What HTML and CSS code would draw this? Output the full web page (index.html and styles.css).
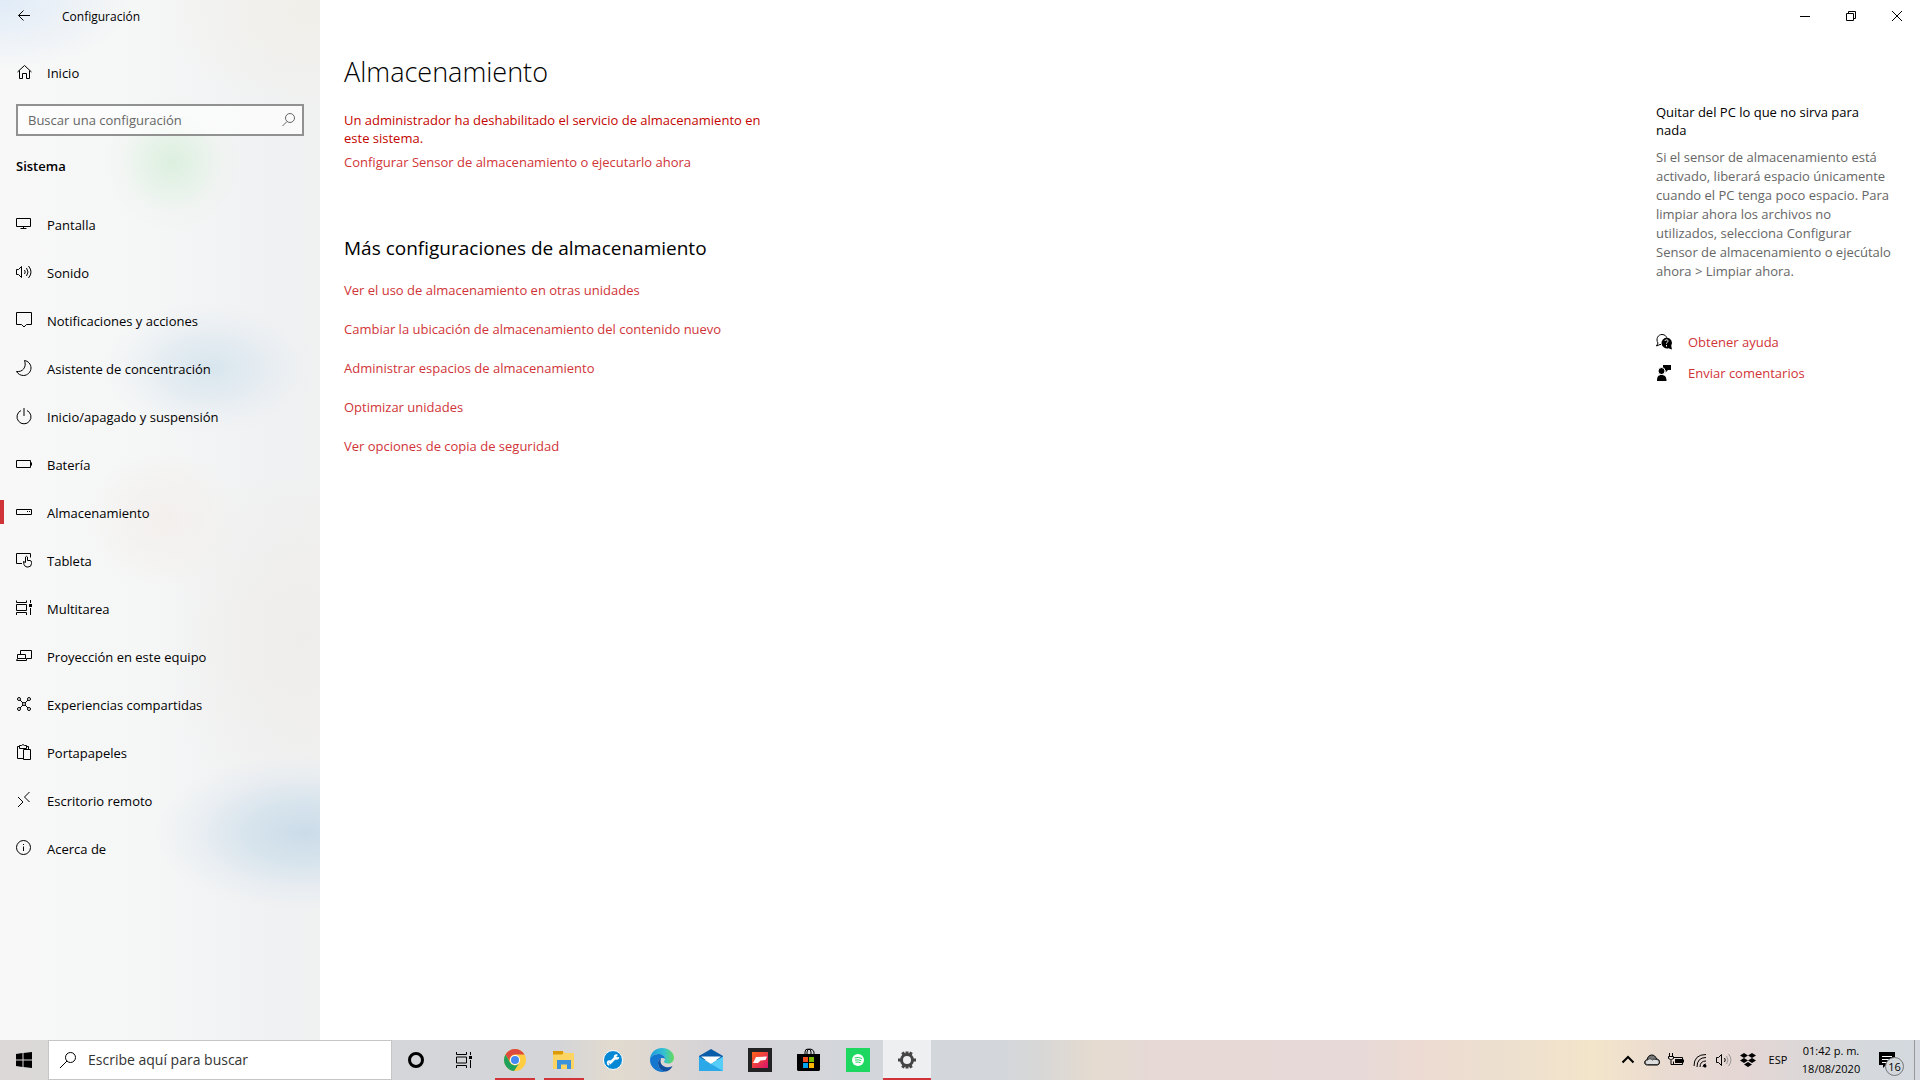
FILE: index.html
```html
<!DOCTYPE html>
<html lang="es">
<head>
<meta charset="utf-8">
<meta name="viewport" content="width=device-width, initial-scale=1">
<title>Configuración</title>
<link rel="stylesheet" href="styles.css">
</head>
<body>
<div class="window">
  <aside class="sidebar">
    <header class="titlebar">
      <button class="back" type="button" aria-label="Atrás"><svg class="icon" viewBox="0 0 16 16"><path d="M14 7.500H2.500M7.500 2.500l-5 5 5 5"/></svg></button>
      <span class="app-name">Configuración</span>
    </header>
    <a class="nav-link home" href="#"><svg class="icon" viewBox="0 0 16 16"><path d="M1.500 8 8.500 1.500 15.500 8M3.500 6.500v8h3v-5h4v5h3v-8"/></svg>Inicio</a>
    <form class="search" role="search">
      <input type="text" aria-label="Buscar una configuración" placeholder="Buscar una configuración">
      <button type="button" aria-label="Buscar"><svg class="icon icon-grey" viewBox="0 0 16 16"><circle cx="10" cy="6" r="4.500"/><path d="M7 9.500 2.500 14"/></svg></button>
    </form>
    <h2 class="section">Sistema</h2>
    <nav class="nav" aria-label="Sistema">
      <a class="nav-link" href="#"><svg class="icon" viewBox="0 0 16 16"><path d="M.5 2.500h14v8H.5zM7.500 10.500v2M4.500 12.500h6"/></svg>Pantalla</a>
      <a class="nav-link" href="#"><svg class="icon" viewBox="0 0 16 16"><path d="M.5 5.500h2l3-3v11l-3-3h-2zM8.500 6q1.500 2 0 4M10.500 4q3 4 0 8M12.500 2q5 6 0 12"/></svg>Sonido</a>
      <a class="nav-link" href="#"><svg class="icon" viewBox="0 0 16 16"><path d="M.5.500h15v12h-5l-2.500 2.500-2.500-2.500h-5z"/></svg>Notificaciones y acciones</a>
      <a class="nav-link" href="#"><svg class="icon" viewBox="0 0 16 16"><path d="M8.500.5c3.500.5 6.500 3.500 6.500 7.500 0 4-3.500 7.500-7.500 7.500-3 0-5.500-1.500-7-4C6.500 12.500 11 7 8.500.5z"/></svg>Asistente de concentración</a>
      <a class="nav-link" href="#"><svg class="icon" viewBox="0 0 16 16"><path d="M8 0v8M5 2.500a7 7 0 1 0 6 0"/></svg>Inicio/apagado y suspensión</a>
      <a class="nav-link" href="#"><svg class="icon" viewBox="0 0 16 16"><path d="M.5 4.500h14v7H.5zM15.500 6.500v3"/></svg>Batería</a>
      <a class="nav-link active" aria-current="page" href="#"><svg class="icon" viewBox="0 0 16 16"><path d="M.5 5.500h15v5H.5zM11 7.500h1M13 7.500h1"/></svg>Almacenamiento</a>
      <a class="nav-link" href="#"><svg class="icon" viewBox="0 0 16 16"><path d="M6 11.500H.5v-10h14v4M9.500 10.500V5q1-1.500 2 0v3.500h2.500q1.500 0 1.500 2v1q0 3.500-3.500 3.500h-1q-2 0-3-2.500l-.5-3z"/></svg>Tableta</a>
      <a class="nav-link" href="#"><svg class="icon" viewBox="0 0 16 16"><path d="M.5.500v2h10v-2M.5 4.500h10v6H.5zM.5 15v-2.500h10V15M14.500 0v3M14.500 8v7"/><path d="M13 4h3v3h-3z" class="solid"/></svg>Multitarea</a>
      <a class="nav-link" href="#"><svg class="icon" viewBox="0 0 16 16"><path d="M4.500 6V2.500h11v8H11M1.500 10.500v-4h8v4M.5 12.500h10v-2H1.500z"/></svg>Proyección en este equipo</a>
      <a class="nav-link" href="#"><svg class="icon" viewBox="0 0 16 16"><circle cx="3" cy="3" r="1.500"/><circle cx="13" cy="3" r="1.500"/><circle cx="3" cy="13" r="1.500"/><circle cx="13" cy="13" r="1.500"/><circle cx="8" cy="8" r="1.500"/><path d="m4 4 3 3M12 4 9 7M4 12l3-3M12 12 9 9"/></svg>Experiencias compartidas</a>
      <a class="nav-link" href="#"><svg class="icon" viewBox="0 0 16 16"><path d="M7 14.500H1.500v-12h2M10 2.500h2.500V5M3.500 4.500v-3h2q1.500-2 3 0h2v3zM7.500 5.500h7v10h-7z"/></svg>Portapapeles</a>
      <a class="nav-link" href="#"><svg class="icon" viewBox="0 0 16 16"><path d="m2 5 5 5-5 5M13.500 0 8.500 5l5 5"/></svg>Escritorio remoto</a>
      <a class="nav-link" href="#"><svg class="icon" viewBox="0 0 16 16"><circle cx="7.500" cy="7.500" r="7"/><path d="M7.500 6.500V11M7.500 4v1"/></svg>Acerca de</a>
    </nav>
  </aside>
  <div class="pane">
    <div class="caption">
      <button type="button" aria-label="Minimizar"><svg viewBox="0 0 10 10"><path d="M0 5.500h10"/></svg></button>
      <button type="button" aria-label="Restaurar"><svg viewBox="0 0 10 10"><path d="M.5 2.500h7v7h-7zM2.500 2V.5h7v7H8"/></svg></button>
      <button type="button" aria-label="Cerrar"><svg viewBox="0 0 10 10"><path d="m0 0 10 10M10 0 0 10"/></svg></button>
    </div>
    <div class="columns">
      <main class="content">
        <h1>Almacenamiento</h1>
        <p class="warning">Un administrador ha deshabilitado el servicio de almacenamiento en este sistema.</p>
        <a class="link" href="#">Configurar Sensor de almacenamiento o ejecutarlo ahora</a>
        <h2>Más configuraciones de almacenamiento</h2>
        <ul class="links">
          <li><a class="link" href="#">Ver el uso de almacenamiento en otras unidades</a></li>
          <li><a class="link" href="#">Cambiar la ubicación de almacenamiento del contenido nuevo</a></li>
          <li><a class="link" href="#">Administrar espacios de almacenamiento</a></li>
          <li><a class="link" href="#">Optimizar unidades</a></li>
          <li><a class="link" href="#">Ver opciones de copia de seguridad</a></li>
        </ul>
      </main>
      <aside class="help">
        <h3>Quitar del PC lo que no sirva para nada</h3>
        <p>Si el sensor de almacenamiento está activado, liberará espacio únicamente cuando el PC tenga poco espacio. Para limpiar ahora los archivos no utilizados, selecciona Configurar Sensor de almacenamiento o ejecútalo ahora &gt; Limpiar ahora.</p>
        <div class="support">
          <a class="link" href="#"><svg class="icon" viewBox="0 0 16 16"><path d="M5 10.500H4L.5 12 2 9C-.5 5 2 .5 6 .5c3 0 4.500 2 4.500 3"/><path class="solid" d="M10.500 3.500a5.500 5.500 0 0 1 4.700 8.300l.8 3.700-3.600-1.200a5.500 5.500 0 1 1-1.900-10.800z"/><path class="light" d="M8.800 7c.5-1.800 3.700-1.500 3.200.3-.3 1-1.500 1-1.500 2.400M10.500 11v1.500"/></svg>Obtener ayuda</a>
          <a class="link" href="#"><svg class="icon" viewBox="0 0 16 16"><path class="solid" d="M7 0h8v5h-3l-2.500 2.500V5H7z"/><circle class="rim" cx="5.500" cy="6" r="3.500"/><path class="solid" d="M1 16c0-4 1-6 4.500-6s5 2 5 6z"/></svg>Enviar comentarios</a>
        </div>
      </aside>
    </div>
  </div>
</div>
<footer class="taskbar">
  <button class="start" type="button" aria-label="Inicio"><svg class="icon" viewBox="0 0 16 16"><path class="solid" d="M0 2l6.500-1v6.500H0zM7.500.9 16 0v7.500H7.500zM0 8.500h6.500V15L0 14zM7.500 8.500H16V16l-8.500-1z"/></svg></button>
  <label class="task-search"><svg class="icon" viewBox="0 0 16 16"><circle cx="10.500" cy="5.500" r="5"/><path d="M7 9 0 16"/></svg><input type="text" aria-label="Buscar" placeholder="Escribe aquí para buscar"></label>
  <div class="tools">
    <button class="task" type="button" aria-label="Cortana"><svg class="icon" viewBox="0 0 16 16"><circle class="ring" cx="8" cy="8" r="6.500"/></svg></button>
    <button class="task" type="button" aria-label="Vista de tareas"><svg class="icon" viewBox="0 0 16 16"><path d="M.5 0v2.500h10V0M.5 5h10v6H.5zM.5 16v-2.500h10V16M14.500 0v3M14.500 8v8"/><path class="solid" d="M13 4h3v3h-3z"/></svg></button>
  </div>
  <div class="apps">
    <button class="task running" type="button" aria-label="Chrome"><svg class="app" viewBox="0 0 24 24"><circle cx="12" cy="12" r="11" fill="#ffcd41"/><path d="M2.500 6.500A11 11 0 0 1 21.500 6.500H12a5.500 5.500 0 0 0-5.300 7z" fill="#de4b3e"/><path d="M2.500 6.500A11 11 0 0 0 11 23l5-7.500a5.500 5.500 0 0 1-9-1z" fill="#1fa15d"/><circle cx="12" cy="12" r="5" fill="#fff"/><circle cx="12" cy="12" r="4" fill="#4688f1"/></svg></button>
    <button class="task running" type="button" aria-label="Explorador de archivos"><svg class="app" viewBox="0 0 24 24"><path d="M1 3h10l2 2h9v16H1z" fill="#fcd462"/><path d="M1 3h10v2.500l-1 1H1z" fill="#dc9a05"/><path d="M5 12h14v9h-4v-4.500H9V21H5z" fill="#3a91dc"/></svg></button>
    <button class="task" type="button" aria-label="Herramientas"><svg class="app" viewBox="0 0 24 24"><circle cx="12" cy="12" r="9.500" fill="#0788d5" stroke="#fff"/><path d="m8.500 15.500 7-7" stroke="#fff" stroke-width="2.500"/><circle cx="8.500" cy="15" r="1.800" fill="none" stroke="#fff" stroke-width="1.800" stroke-dasharray="8.500 2.800" stroke-dashoffset="-2.800"/><circle cx="15.500" cy="9" r="1.800" fill="none" stroke="#fff" stroke-width="1.800" stroke-dasharray="8.500 2.800"/></svg></button>
    <button class="task" type="button" aria-label="Edge"><svg class="app" viewBox="0 0 24 24"><defs><linearGradient id="edge-top" x2="1"><stop offset="0" stop-color="#1b9de2"/><stop offset=".6" stop-color="#35c1d0"/><stop offset="1" stop-color="#66dc5a"/></linearGradient></defs><path d="M0 12C0 5 5 0 12 0s12 5 12 9.500c0 4-3 6-6 6-2.500 0-4-1-4-2 0-.7 1-1 1-2.500C15 8 12 6 8.500 6 4 6 .5 9 0 12z" fill="url(#edge-top)"/><path d="M0 12c0-3 4-6 8.500-6C12 6 15 8 15 11c-2.500-2.500-7-.500-7 4 0 5 4 8.500 8 8.500C8 25.500 0 20 0 12z" fill="#1377d0"/><path d="M11 10c-2 1-3 3-3 5 0 5 4 8.500 8 8.500 3-.5 5.500-3 6.500-5.500-5 3-12 .500-12-5 0-1 .5-2 .5-3z" fill="#10509f"/></svg></button>
    <button class="task" type="button" aria-label="Correo"><svg class="app" viewBox="0 0 24 24"><path d="m0 8 12-7 12 7v4H0z" fill="#0a5ba8"/><path d="M2 8.500h20L12 16z" fill="#fff"/><path d="M0 8.500 12 16l12-7.500V23H0z" fill="#2ba8e8"/><path d="M12 16 24 8.500V23z" fill="#55cdf8"/></svg></button>
    <button class="task" type="button" aria-label="Juego"><svg class="app" viewBox="0 0 24 24"><defs><linearGradient id="game" x2="1" y2="1"><stop offset="0" stop-color="#ff6419"/><stop offset="1" stop-color="#d9146e"/></linearGradient></defs><path d="M0 0h24v24H0z" fill="#232326"/><path d="M4 4h16v16H4z" fill="url(#game)"/><path d="m8 9 11-.5-1.500 3.500-5 .5-2.500 2.500H5z" fill="#fff"/></svg></button>
    <button class="task" type="button" aria-label="Microsoft Store"><svg class="app" viewBox="0 0 24 24"><path d="M8 6V4q0-3 3-3t3 3v2M10 6V4q0-3 3-3t4 3v2" fill="none" stroke="#000"/><path d="M0 6h23v16l-1 1H1l-1-1z"/><path d="M6 9h5v5H6z" fill="#f25022"/><path d="M12 9h5v5h-5z" fill="#7fba00"/><path d="M6 15h5v5H6z" fill="#00a4ef"/><path d="M12 15h5v5h-5z" fill="#ffb900"/></svg></button>
    <button class="task" type="button" aria-label="Spotify"><svg class="app" viewBox="0 0 24 24"><path d="M0 0h24v24H0z" fill="#1ed760"/><circle cx="12" cy="12" r="6" fill="#fff"/><path d="M8.500 10q4-1.500 7.500.5M9 12.200q3.500-1 6.200.5M9.500 14.300q3-.8 5 .4" fill="none" stroke="#1ed760"/></svg></button>
    <button class="task running current" type="button" aria-label="Configuración"><svg class="app" viewBox="0 0 24 24"><circle cx="12" cy="12" r="5.500" fill="none" stroke="#444" stroke-width="3"/><path d="M18 12h3M3 12h3M9 6.800 7.500 4.200M15 6.800l1.500-2.600M9 17.200l-1.500 2.600M15 17.200l1.500 2.600M12 6V3.500M12 18v2.500" stroke="#444" stroke-width="3"/></svg></button>
  </div>
  <div class="tray">
    <button type="button" aria-label="Mostrar iconos ocultos"><svg class="icon" viewBox="0 0 16 16"><path class="bold" d="m2.500 10.500 5.500-5.500 5.500 5.500"/></svg></button>
    <button type="button" aria-label="OneDrive"><svg class="icon" viewBox="0 0 16 16"><path d="M3.500 13C-.5 13 0 8 3 8 4 1.500 11 1.500 12.500 7c4 0 4 6 .5 6z" fill="#777"/><path class="cloud" d="M3.500 12.500c-3 0-3-4.500 0-4.500 2-2 4-1 5 0 1-1 2-1 3.500-.5 4 0 4 5 1 5z"/></svg></button>
    <button type="button" aria-label="Batería"><svg class="icon" viewBox="0 0 16 16"><path d="M5.500 5.500h9v7h-9v-3M15.500 7.500v3M1.500 1v3M4.500 1v3M.5 4.500h5v2l-2 1h-1l-2-1zM3 8v4.500h2.500"/><path class="solid" d="M7 7h7v4H7z"/></svg></button>
    <button type="button" aria-label="Wi-Fi"><svg class="icon" viewBox="0 0 16 16"><path d="M2 14Q2 2.500 14 2.500M5 15Q5 5.500 14 5.500M8 15q0-6 6-6M11 15q0-3 3-3"/><circle class="solid" cx="13" cy="14" r="1.500"/></svg></button>
    <button type="button" aria-label="Volumen"><svg class="icon" viewBox="0 0 16 16"><path d="M.5 5.500h2l3-3v11l-3-3h-2zM8.500 6q1.500 2 0 4"/><path class="faint" d="M10.500 4q3 4 0 8M12.500 2q5 6 0 12"/></svg></button>
    <button type="button" aria-label="Dropbox"><svg class="icon" viewBox="0 0 16 16"><path class="solid" d="m4 1 4 2.500L4 6 0 3.500zM12 1l4 2.500L12 6 8 3.500zM4 6l4 2.500L4 11 0 8.500zM12 6l4 2.500-4 2.500-4-2.500zM8 10l4 2.500L8 15l-4-2.500z"/></svg></button>
    <button class="language" type="button">ESP</button>
    <button class="clock" type="button"><time datetime="2020-08-18T13:42">01:42 p. m.<br>18/08/2020</time></button>
    <button class="alerts" type="button" aria-label="16 notificaciones"><svg class="icon" viewBox="0 0 16 16"><path class="solid" d="M0 0h16v13H7l-3 3v-3H0z"/><path class="light" d="M3 4.500h10M3 7.500h10M3 10.500h6"/></svg><span class="badge">16</span></button>
    <button class="peek" type="button" aria-label="Mostrar escritorio"></button>
  </div>
</footer>
</body>
</html>
```
FILE: styles.css
```css
* { box-sizing: border-box; }
body {
  margin: 0;
  min-height: 100vh;
  display: flex;
  flex-direction: column;
  font: 13px/18px "Open Sans", "Segoe UI", sans-serif;
  color: #000;
  background: #fff;
}
h1, h2, h3, p, ul { margin: 0; padding: 0; font-size: 13px; font-weight: 400; }
a { color: inherit; text-decoration: none; }
button { border: 0; padding: 0; background: none; font: inherit; color: inherit; }
input { font: inherit; color: inherit; }

.icon { width: 16px; height: 16px; flex: none; fill: none; stroke: #000; overflow: visible; }
.icon .solid { fill: #000; stroke: none; }
.icon .light { stroke: #fff; }
.icon .rim { fill: #000; stroke: #fff; }
.icon .ring { stroke-width: 3; }
.icon .bold { stroke-width: 2; }
.icon .faint { stroke: #999; }
.icon .cloud { fill: #ddd; stroke: #333; }
.icon-grey { stroke: #666; }

.window { flex: 1; display: flex; }
.sidebar {
  flex: none;
  width: 320px;
  background:
    radial-gradient(ellipse 68px 68px at 172px 162px, #dcf0df 0%, #dff1e2b0 35%, #e6f2e840 70%, #e8f2ea00 100%),
    radial-gradient(ellipse 105px 66px at 210px 368px, #d8e5ed 0%, #dce8f0b0 40%, #e2ebf440 75%, #e8eff600 100%),
    radial-gradient(ellipse 150px 78px at 305px 833px, #cbdce9 0%, #d0e0ebc0 40%, #dce7f150 75%, #e4ecf500 100%),
    radial-gradient(ellipse 80px 70px at 165px 520px, #f3efed 0%, #f3efed00 100%),
    radial-gradient(ellipse 130px 70px at 0 0, #e0ebf7 0%, #e5edf600 100%),
    radial-gradient(ellipse 150px 100px at 310px 10px, #f1efe9 0%, #f2efe800 100%),
    radial-gradient(ellipse 140px 180px at 300px 640px, #efedeb 0%, #f0ecea00 100%),
    linear-gradient(90deg, #f8f8f8 0%, #f5f6f6 45%, #f0f1f2 85%, #f0f1f1 100%);
}
.titlebar { display: flex; align-items: center; height: 32px; font-size: 12px; }
.back { width: 48px; height: 32px; display: grid; place-items: center; }
.app-name { padding: 2px 0 0 14px; }
.nav-link { display: flex; align-items: center; gap: 15px; height: 48px; padding: 2px 0 0 16px; }
.nav-link .icon { margin-bottom: 2px; }
.home { margin-top: 16px; }
.search { display: flex; height: 32px; margin: 8px 16px 0; border: 2px solid #919191; background: #ffffffa0; }
.search input { flex: 1; min-width: 0; border: 0; padding: 0 10px; background: none; outline: 0; }
.search input::placeholder { color: #666; opacity: 1; }
.search button { width: 28px; display: grid; place-items: center; }
.section { margin: 21px 16px 25px; font-weight: 600; }
.active { background: linear-gradient(#d13438, #d13438) 0 50% / 4px 24px no-repeat; }

.pane { flex: 1; min-width: 0; }
.caption { display: flex; justify-content: flex-end; height: 32px; }
.caption button { width: 46px; display: grid; place-items: center; }
.caption svg { width: 10px; height: 10px; fill: none; stroke: #000; overflow: visible; }
.columns { display: flex; justify-content: space-between; padding: 20px 29px 0 24px; }
.content { width: 432px; }
.content h1 { font-size: 27px; line-height: 40px; font-weight: 300; }
.warning { margin: 19px 0 6px; color: #c50500; }
.link { color: #d13438; }
.content h2 { margin-top: 63px; font-size: 19px; line-height: 28px; }
.links { list-style: none; display: grid; gap: 21px; margin-top: 19px; }
.links li { height: 18px; }
.help { width: 235px; padding-top: 51px; }
.help p { margin-top: 9px; line-height: 19px; color: #666; }
.support { display: grid; gap: 13px; margin-top: 52px; }
.support .link { display: flex; align-items: center; gap: 16px; }

.taskbar {
  flex: none;
  display: flex;
  height: 40px;
  background: linear-gradient(90deg, #dcd8d8 0, #d3d5d9 25%, #d4d5d9 29%, #e2dace 32%, #d5d3d7 37%, #d3d6da 44%, #d3d6da 52%, #d7d7d7 54%, #e5dbd0 57%, #e6d9d6 60%, #e7d9d7 71%, #eddbd2 74%, #ecdfcf 78%, #f3e5ca 83%, #e9dad2 87%, #e3d6d4 91%, #d5d9dc 97%, #d3d9df 100%);
}
.start { width: 48px; display: grid; place-items: center; }
.task-search { display: flex; align-items: center; gap: 12px; width: 344px; padding-left: 11px; border: 1px solid #c6c6c6; background: #fff; }
.task-search input { flex: 1; min-width: 0; border: 0; padding: 0; font-size: 14px; outline: 0; }
.task-search input::placeholder { color: #333; opacity: 1; }
.tools { display: flex; margin-right: 3px; }
.apps { display: flex; gap: 1px; }
.task { width: 48px; display: grid; place-items: center; }
.app { width: 24px; height: 24px; }
.running { background: linear-gradient(#d13438, #d13438) 50% 100% / 40px 2px no-repeat; }
.current { background: linear-gradient(#d13438, #d13438) 50% 100% / 100% 2px no-repeat #eeeff1; }
.tray { display: flex; margin-left: auto; font-size: 11px; line-height: 18px; }
.tray button { width: 24px; display: grid; place-items: center; }
.tray .language { width: 36px; }
.tray .clock { width: 70px; }
.tray .alerts { position: relative; width: 48px; padding-right: 6px; }
.badge { position: absolute; right: 10px; bottom: 4px; width: 19px; height: 19px; border: 1px solid #777; border-radius: 50%; background: #d3d8dd; line-height: 17px; text-align: center; }
.tray .peek { width: 6px; border-left: 1px solid #999; }
```
